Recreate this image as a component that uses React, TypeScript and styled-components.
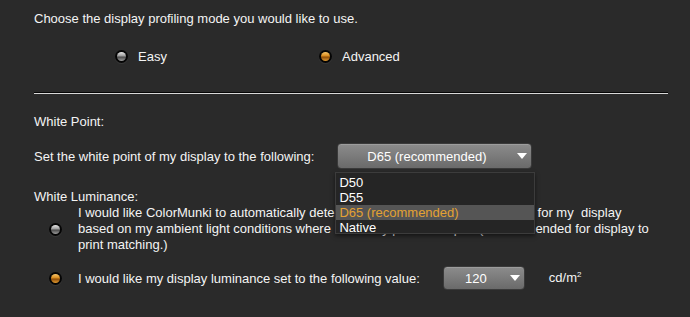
import React from "react";
import styled, { createGlobalStyle } from "styled-components";

const GlobalStyle = createGlobalStyle`
  body {
    margin: 0;
    background: #2a2a2a;
    font-family: "Liberation Sans", Arial, sans-serif;
    font-size: 13px;
    color: #f4f4f4;
  }
`;

const Page = styled.div`
  width: 690px;
  height: 317px;
  box-sizing: border-box;
  padding: 11px 22px 0 34px;
  background: #2a2a2a;
  overflow: hidden;
`;

const Text = styled.div<{ top?: number }>`
  line-height: 16px;
  margin-top: ${({ top }) => top ?? 0}px;
`;

const ModeRow = styled.div`
  display: flex;
  margin-top: 21px;
  padding-left: 81px;
  height: 16px;
  align-items: center;
`;

const Option = styled.label<{ width?: number }>`
  display: flex;
  align-items: center;
  gap: 10px;
  width: ${({ width }) => (width ? `${width}px` : "auto")};
`;

const Radio = styled.span<{ checked?: boolean }>`
  width: 13px;
  height: 13px;
  flex: 0 0 13px;
  border-radius: 50%;
  background: #050505;
  display: flex;
  align-items: center;
  justify-content: center;
  box-shadow: 0 1px 1px rgba(255, 255, 255, 0.08);

  &::after {
    content: "";
    width: 9px;
    height: 9px;
    border-radius: 50%;
    background: ${({ checked }) =>
      checked
        ? "linear-gradient(#f6c46a 0%, #d88a1c 45%, #8a4a08 55%, #e09a30 100%)"
        : "linear-gradient(#e6e6e6 0%, #9a9a9a 45%, #4a4a4a 55%, #9a9a9a 100%)"};
  }
`;

const Divider = styled.div`
  margin-top: 28px;
  height: 1px;
  background: #050505;
  border-bottom: 1px solid #d8d8d8;
`;

const SelectRow = styled.div<{ top: number; gap: number }>`
  display: flex;
  align-items: center;
  margin-top: ${({ top }) => top}px;
  gap: ${({ gap }) => gap}px;
`;

const SelectWrap = styled.div`
  position: relative;
`;

const SelectButton = styled.div<{ width: number; height: number }>`
  box-sizing: border-box;
  width: ${({ width }) => width}px;
  height: ${({ height }) => height}px;
  border-radius: 4px;
  border: 1px solid #3a3a3a;
  background: linear-gradient(#8c8c8c, #6a6a6a);
  box-shadow: inset 0 1px 0 rgba(255, 255, 255, 0.15);
  display: flex;
  align-items: center;
  justify-content: center;
  padding-right: 16px;
  color: #ffffff;
  position: relative;
`;

const Arrow = styled.span`
  position: absolute;
  right: 4px;
  top: 50%;
  margin-top: -3px;
  width: 0;
  height: 0;
  border-left: 5px solid transparent;
  border-right: 5px solid transparent;
  border-top: 6px solid #ffffff;
`;

const List = styled.div`
  position: absolute;
  left: -2px;
  top: 29px;
  width: 200px;
  height: 62px;
  box-sizing: border-box;
  padding-top: 2px;
  background: #252525;
  border: 1px solid #3c3c3c;
  box-shadow: 0 2px 4px rgba(0, 0, 0, 0.5);
  z-index: 2;
`;

const ListItem = styled.div<{ active?: boolean }>`
  height: 15px;
  line-height: 15px;
  padding-left: 3px;
  color: ${({ active }) => (active ? "#e3a233" : "#ffffff")};
  background: ${({ active }) => (active ? "#555555" : "transparent")};
`;

const Choice = styled.div<{ top: number }>`
  display: flex;
  align-items: center;
  gap: 16px;
  padding-left: 15px;
  margin-top: ${({ top }) => top}px;
`;

const Unit = styled.span`
  margin-left: 1px;

  sup {
    font-size: 8px;
  }
`;

const whitePoints = ["D50", "D55", "D65 (recommended)", "Native"];

const App: React.FC = () => (
  <Page>
    <GlobalStyle />
    <Text>Choose the display profiling mode you would like to use.</Text>
    <ModeRow>
      <Option width={204}>
        <Radio />
        Easy
      </Option>
      <Option>
        <Radio checked />
        Advanced
      </Option>
    </ModeRow>
    <Divider />
    <Text top={20}>White Point:</Text>
    <SelectRow top={13} gap={23}>
      <span>Set the white point of my display to the following:</span>
      <SelectWrap>
        <SelectButton width={195} height={26}>
          D65 (recommended)
          <Arrow />
        </SelectButton>
        <List>
          {whitePoints.map((wp) => (
            <ListItem key={wp} active={wp === "D65 (recommended)"}>
              {wp}
            </ListItem>
          ))}
        </List>
      </SelectWrap>
    </SelectRow>
    <Text top={20}>White Luminance:</Text>
    <Choice top={0}>
      <Radio />
      <Text>
        I would like ColorMunki to automatically determine the optimal luminance levels for my{"\u00a0"} display
        <br />
        based on my ambient light conditions where I view my printed output. (Recommended for display to
        <br />
        print matching.)
      </Text>
    </Choice>
    <Choice top={13}>
      <Radio checked />
      <SelectRow top={0} gap={23}>
        <span>I would like my display luminance set to the following value:</span>
        <SelectButton width={82} height={24}>
          120
          <Arrow />
        </SelectButton>
        <Unit>
          cd/m<sup>2</sup>
        </Unit>
      </SelectRow>
    </Choice>
  </Page>
);

export default App;
